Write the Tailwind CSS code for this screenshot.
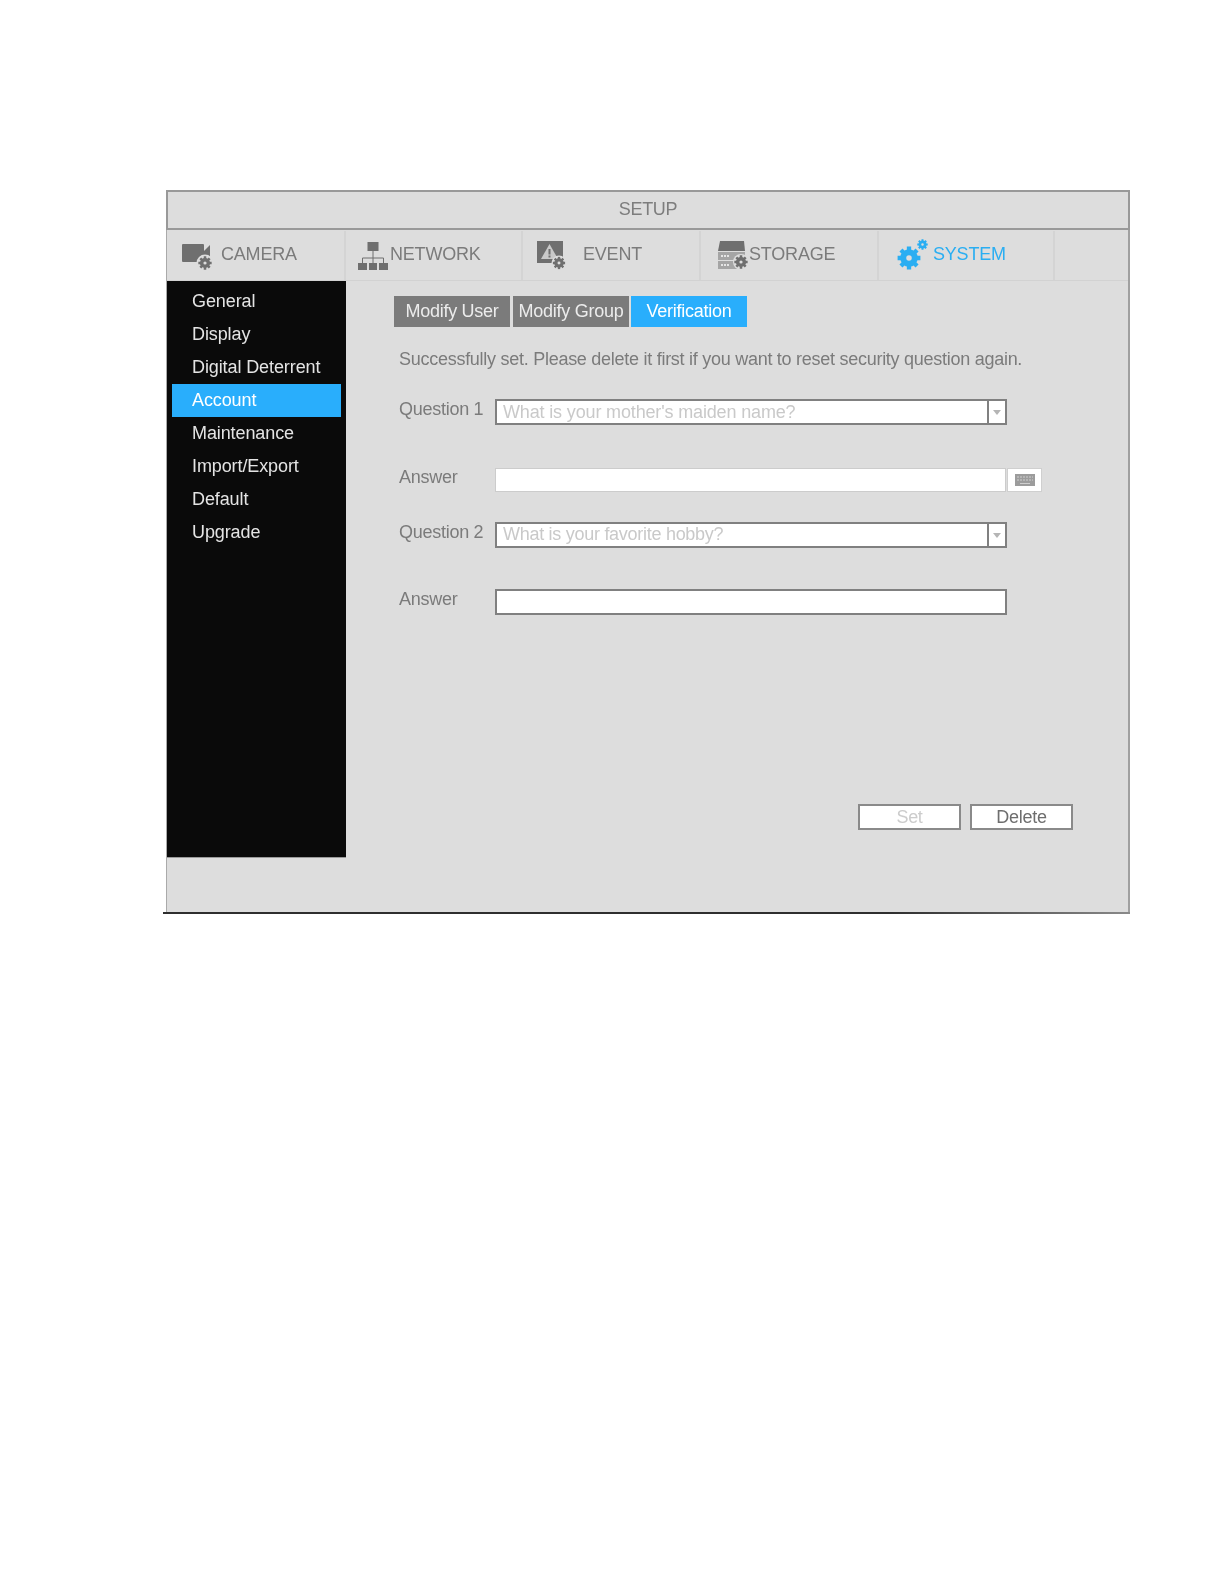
<!DOCTYPE html>
<html lang="en">
<head>
<meta charset="utf-8">
<title>Setup</title>
<script src="https://cdn.jsdelivr.net/npm/@tailwindcss/browser@4"></script>
</head>
<body class="bg-white font-['Liberation_Sans',Arial,sans-serif]">
<svg width="0" height="0" class="absolute">
  <defs>
    <symbol id="gear" viewBox="0 0 20 20">
      <circle cx="10" cy="10" r="4.800" fill="none" stroke="currentColor" stroke-width="5"/>
      <g stroke="currentColor" stroke-width="3.600">
        <path d="M10 0.500V4M10 16V19.500M0.500 10H4M16 10H19.500M3.300 3.300L5.800 5.800M14.200 14.200L16.700 16.700M3.300 16.700L5.800 14.200M14.200 5.800L16.700 3.300"/>
      </g>
    </symbol>
  </defs>
</svg>
<div class="w-[1224px] h-[1584px] pt-[190px] pl-[166px] blur-[0.6px]">
  <div class="w-[964px] bg-[#dddddd] border-l border-r-2 border-l-[#aaaaaa] border-r-[#a0a0a0] text-[18px] leading-[20px] tracking-[-0.27px] text-[#7b7b7b]">
    <div class="h-[40px] border-2 border-[#999999] -ml-px -mr-[2px] flex items-center justify-center pb-[2px] text-[#7d7d7d]">SETUP</div>
    <div class="h-[51px] flex pt-[1px] border-b border-[#d2d2d2] tracking-[-0.2px]">
      <div class="w-[179px] border-r-2 border-[#d4d4d4] flex items-center pl-[15px] pb-[3px]">
        <svg width="32" height="30" viewBox="0 0 32 30" class="shrink-0 mt-[3px] text-[#6f6f6f]">
          <rect x="0" y="3" width="22" height="18" rx="1" fill="currentColor"/>
          <path d="M21 11L28 4V20L21 15Z" fill="currentColor"/>
          <circle cx="23" cy="22" r="8.500" fill="#dddddd"/>
          <use href="#gear" x="16" y="15" width="14" height="14"/>
        </svg>
        <span class="ml-[7px]">CAMERA</span>
      </div>
      <div class="w-[177px] border-r-2 border-[#d4d4d4] flex items-center pl-[12px] pb-[3px]">
        <svg width="30" height="28" viewBox="0 0 30 28" class="shrink-0 mt-[3px] text-[#6f6f6f]">
          <rect x="9.500" y="0" width="11" height="9" fill="currentColor"/>
          <path d="M15 9V16M4.500 22V16H25.500V22M15 16V22" fill="none" stroke="currentColor" stroke-width="1"/>
          <rect x="0" y="21" width="9" height="7" fill="currentColor"/>
          <rect x="11" y="21" width="8" height="7" fill="currentColor"/>
          <rect x="21" y="21" width="9" height="7" fill="currentColor"/>
        </svg>
        <span class="ml-[2px]">NETWORK</span>
      </div>
      <div class="w-[178px] border-r-2 border-[#d4d4d4] flex items-center pl-[14px] pb-[3px]">
        <svg width="30" height="30" viewBox="0 0 30 30" class="shrink-0 mt-[3px] text-[#6f6f6f]">
          <rect x="0" y="0" width="26" height="22" fill="currentColor"/>
          <path d="M12.500 3L21 18H4Z" fill="#c9c9c9"/>
          <rect x="11.500" y="8" width="2" height="5.500" fill="currentColor"/>
          <rect x="11.500" y="14.500" width="2" height="2" fill="currentColor"/>
          <circle cx="22" cy="22" r="7.500" fill="#dddddd"/>
          <use href="#gear" x="15.500" y="15.500" width="13" height="13"/>
        </svg>
        <span class="ml-[16px]">EVENT</span>
      </div>
      <div class="w-[178px] border-r-2 border-[#d4d4d4] flex items-center pl-[17px] pb-[3px]">
        <svg width="32" height="30" viewBox="0 0 32 30" class="shrink-0 mt-[3px] text-[#6f6f6f]">
          <path d="M2 0H26L27 10H0Z" fill="currentColor"/>
          <rect x="0" y="11" width="27" height="8" fill="#a5a5a5"/>
          <rect x="0" y="20" width="27" height="8" fill="#a5a5a5"/>
          <path d="M3 15H11M3 24H11" stroke="#e5e5e5" stroke-width="2" stroke-dasharray="2 1"/>
          <circle cx="23" cy="21" r="8" fill="#dddddd"/>
          <use href="#gear" x="16" y="14" width="14" height="14"/>
        </svg>
        <span class="-ml-[1px]">STORAGE</span>
      </div>
      <div class="w-[176px] border-r-2 border-[#d4d4d4] flex items-center pl-[18px] pb-[3px] text-[#2aaef2]">
        <svg width="32" height="32" viewBox="0 0 32 32" class="shrink-0">
          <use href="#gear" x="0" y="8" width="24" height="24"/>
          <use href="#gear" x="20" y="1" width="11" height="11"/>
        </svg>
        <span class="ml-[4px]">SYSTEM</span>
      </div>
    </div>
    <div class="h-[577px] flex">
      <nav class="w-[179px] shrink-0 bg-[#0a0a0a] border-b border-[#9a9a9a] pt-[4px] tracking-[-0.1px] text-[#e4e4e4]">
        <div class="h-[33px] flex items-center pl-[25px] pb-[2px]">General</div>
        <div class="h-[33px] flex items-center pl-[25px] pb-[2px]">Display</div>
        <div class="h-[33px] flex items-center pl-[25px] pb-[2px]">Digital Deterrent</div>
        <div class="h-[33px] flex items-center pl-[20px] pb-[2px] mx-[5px] bg-[#29aefc] text-white">Account</div>
        <div class="h-[33px] flex items-center pl-[25px] pb-[2px]">Maintenance</div>
        <div class="h-[33px] flex items-center pl-[25px] pb-[2px]">Import/Export</div>
        <div class="h-[33px] flex items-center pl-[25px] pb-[2px]">Default</div>
        <div class="h-[33px] flex items-center pl-[25px] pb-[2px]">Upgrade</div>
      </nav>
      <main class="flex-1 pt-[15px]">
        <div class="flex pl-[48px] h-[31px] text-[#ececec]">
          <div class="w-[116px] pb-[2px] bg-[#7b7b7b] flex items-center justify-center">Modify User</div>
          <div class="w-[116px] pb-[2px] ml-[3px] bg-[#7b7b7b] flex items-center justify-center">Modify Group</div>
          <div class="w-[116px] pb-[2px] ml-[2px] bg-[#29aefc] text-white flex items-center justify-center">Verification</div>
        </div>
        <div class="pl-[53px]">
          <p class="mt-[22px] h-[20px] whitespace-nowrap">Successfully set. Please delete it first if you want to reset security question again.</p>
          <div class="mt-[30px] flex items-start">
            <span class="w-[96px]">Question 1</span>
            <div class="w-[512px] h-[26px] bg-white border-2 border-[#808080] flex items-center">
              <span class="flex-1 pl-[6px] tracking-[-0.15px] text-[#c9c9c9]">What is your mother's maiden name?</span>
              <div class="w-[18px] h-full border-l-2 border-[#808080] flex items-center justify-center">
                <svg width="8" height="5" viewBox="0 0 8 5"><path d="M0 0H8L4 5Z" fill="#b5b5b5"/></svg>
              </div>
            </div>
          </div>
          <div class="mt-[43px] flex items-start">
            <span class="w-[96px] -mt-[1px]">Answer</span>
            <div class="w-[511px] h-[24px] bg-white border border-[#cccccc]"></div>
            <div class="w-[35px] h-[24px] ml-[1px] bg-white border border-[#cfcfcf] flex items-center justify-center">
              <svg width="20" height="12" viewBox="0 0 20 12">
                <rect width="20" height="12" fill="#9c9c9c"/>
                <path d="M2 3H18M2 6H18" stroke="#cfcfcf" stroke-width="1" stroke-dasharray="2 1"/>
                <path d="M5 9.500H15" stroke="#cfcfcf" stroke-width="1"/>
              </svg>
            </div>
          </div>
          <div class="mt-[30px] flex items-start">
            <span class="w-[96px]">Question 2</span>
            <div class="w-[512px] h-[26px] pb-[2px] bg-white border-2 border-[#808080] flex items-center">
              <span class="flex-1 pl-[6px] tracking-[-0.28px] text-[#c9c9c9]">What is your favorite hobby?</span>
              <div class="w-[18px] h-[24px] mb-[-2px] border-l-2 border-[#808080] flex items-center justify-center">
                <svg width="8" height="5" viewBox="0 0 8 5"><path d="M0 0H8L4 5Z" fill="#b5b5b5"/></svg>
              </div>
            </div>
          </div>
          <div class="mt-[41px] flex items-start">
            <span class="w-[96px]">Answer</span>
            <div class="w-[512px] h-[26px] bg-white border-2 border-[#808080]"></div>
          </div>
        </div>
        <div class="mt-[189px] pr-[55px] flex justify-end gap-[9px]">
          <div class="w-[103px] h-[26px] bg-white border-2 border-[#8a8a8a] flex items-center justify-center text-[#cccccc]">Set</div>
          <div class="w-[103px] h-[26px] bg-white border-2 border-[#8a8a8a] flex items-center justify-center text-[#6e6e6e]">Delete</div>
        </div>
      </main>
    </div>
    <div class="h-[54px]"></div>
  </div>
  <div class="w-[967px] h-[2px] -ml-[3px] bg-linear-to-r from-[#2e2e2e] via-[#2e2e2e] via-75% to-[#8a8a8a]"></div>
</div>
</body>
</html>
